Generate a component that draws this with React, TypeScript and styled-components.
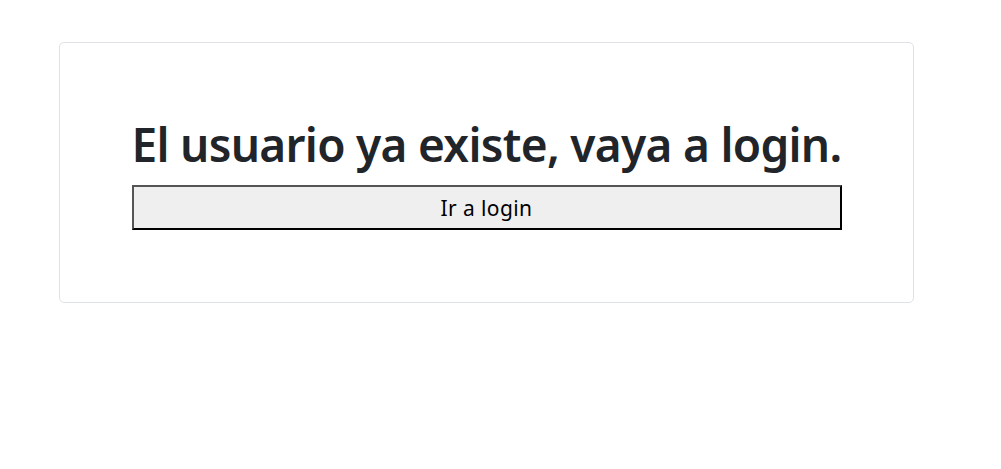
import React from "react";
import styled, { createGlobalStyle } from "styled-components";

const Global = createGlobalStyle`
  html, body { margin: 0; padding: 0; background: #fff; }
  body { font-family: "Noto Sans", "Open Sans", sans-serif; color: #212529; }
`;

const Page = styled.div`
  padding: 42px 87px 0 59px;
`;

const Card = styled.section`
  box-sizing: border-box;
  height: 261px;
  border: 1px solid #dfe2e5;
  border-radius: 5px;
  display: flex;
  align-items: center;
  justify-content: center;
`;

const Content = styled.div`
  width: 710px;
  display: flex;
  flex-direction: column;
  margin-top: 2px;
`;

const Title = styled.h1`
  margin: 0 0 13px;
  font-size: 46px;
  font-weight: 600;
  line-height: 1.2;
  white-space: nowrap;
  text-align: center;
  letter-spacing: -0.7px;
`;

const Button = styled.button`
  box-sizing: border-box;
  width: 100%;
  height: 45px;
  font-family: "Noto Sans", sans-serif;
  font-size: 21px;
  letter-spacing: 0.4px;
  color: #000;
  background: #efefef;
  border-width: 2px;
  border-style: solid;
  border-color: #555 #000 #000 #555;
  padding: 0;
`;

export default function App() {
  return (
    <>
      <Global />
      <Page>
        <Card>
          <Content>
            <Title>El usuario ya existe, vaya a login.</Title>
            <Button>Ir a login</Button>
          </Content>
        </Card>
      </Page>
    </>
  );
}
